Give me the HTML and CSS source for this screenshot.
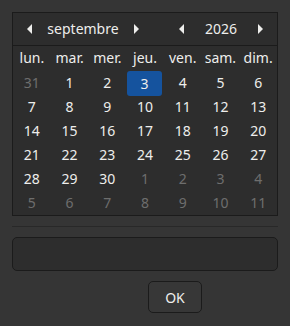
FILE: index.html
```html
<!DOCTYPE html>
<html lang="fr">
<head>
    <meta charset="UTF-8">
    <title>Calendrier</title>
    <link rel="stylesheet" href="styles.css">
</head>
<body>

<div class="dialog">
    <!-- Calendar -->
    <div class="calendar">
        <div class="cal-header">
            <div class="spin month">
                <span class="arrow left"></span>
                <span class="label">septembre</span>
                <span class="arrow right"></span>
            </div>
            <div class="spin year">
                <span class="arrow left"></span>
                <span class="label">2026</span>
                <span class="arrow right"></span>
            </div>
        </div>
        <div class="days">
            <div class="dayname">lun.</div>
            <div class="dayname">mar.</div>
            <div class="dayname">mer.</div>
            <div class="dayname">jeu.</div>
            <div class="dayname">ven.</div>
            <div class="dayname">sam.</div>
            <div class="dayname">dim.</div>

            <div class="day other">31</div><div class="day">1</div><div class="day">2</div><div class="day selected">3</div><div class="day">4</div><div class="day">5</div><div class="day">6</div>
            <div class="day">7</div><div class="day">8</div><div class="day">9</div><div class="day">10</div><div class="day">11</div><div class="day">12</div><div class="day">13</div>
            <div class="day">14</div><div class="day">15</div><div class="day">16</div><div class="day">17</div><div class="day">18</div><div class="day">19</div><div class="day">20</div>
            <div class="day">21</div><div class="day">22</div><div class="day">23</div><div class="day">24</div><div class="day">25</div><div class="day">26</div><div class="day">27</div>
            <div class="day">28</div><div class="day">29</div><div class="day">30</div><div class="day other">1</div><div class="day other">2</div><div class="day other">3</div><div class="day other">4</div>
            <div class="day other">5</div><div class="day other">6</div><div class="day other">7</div><div class="day other">8</div><div class="day other">9</div><div class="day other">10</div><div class="day other">11</div>
        </div>
    </div>

    <div class="separator"></div>

    <!-- Entry -->
    <div class="entry"></div>

    <div class="actions">
        <button type="button" class="btn">OK</button>
    </div>
</div>

</body>
</html>
```

FILE: styles.css
```css
body {
    margin: 0;
    background: #353535;
    font-family: "Noto Sans", "DejaVu Sans", sans-serif;
    font-size: 14px;
    color: #eeeeec;
}
.dialog {
    padding: 12px;
}
.calendar {
    background: #2d2d2d;
    border: 1px solid #1b1b1b;
    width: 264px;
}
.cal-header {
    height: 32px;
    border-bottom: 1px solid #1b1b1b;
    display: flex;
    align-items: center;
}
.spin {
    display: flex;
    align-items: center;
    justify-content: space-between;
}
.month {
    width: 112px;
    margin-left: 14px;
}
.year {
    width: 84px;
    margin-left: 40px;
}
.arrow {
    width: 0;
    height: 0;
    border-top: 5px solid transparent;
    border-bottom: 5px solid transparent;
}
.arrow.left {
    border-right: 5px solid #eeeeec;
}
.arrow.right {
    border-left: 5px solid #eeeeec;
}
.label {
    line-height: 20px;
}
.days {
    display: grid;
    grid-template-columns: repeat(7, 1fr);
    grid-template-rows: repeat(7, 24px);
    padding-top: 1px;
}
.dayname {
    text-align: center;
    line-height: 22px;
}
.day {
    text-align: center;
    line-height: 24px;
}
.day.other {
    color: #6e6e6d;
}
.day.selected {
    background: #15539e;
    border-radius: 3px;
    margin: 0 2px 0 1px;
    line-height: 25px;
    height: 25px;
}
.separator {
    height: 1px;
    background: #282828;
    margin-top: 10px;
}
.entry {
    margin-top: 10px;
    height: 32px;
    background: #2d2d2d;
    border: 1px solid #1b1b1b;
    border-radius: 5px;
}
.actions {
    display: flex;
    margin-top: 10px;
    padding-left: 136px;
}
.btn {
    width: 54px;
    height: 32px;
    background: #373737;
    border: 1px solid #1b1b1b;
    border-radius: 5px;
    color: #eeeeec;
    font-family: "Noto Sans", "DejaVu Sans", sans-serif;
    font-size: 14px;
    padding: 0;
}
```
